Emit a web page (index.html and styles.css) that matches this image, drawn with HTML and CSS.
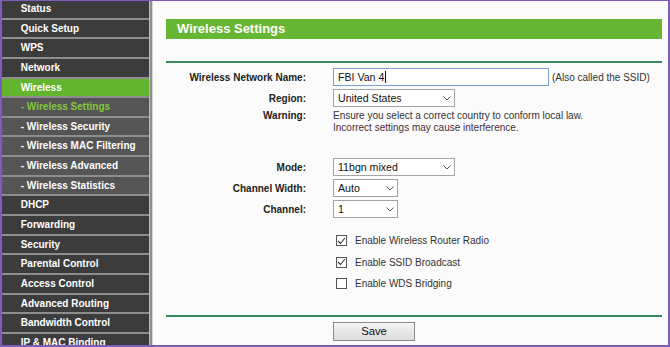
FILE: index.html
```html
<!DOCTYPE html>
<html lang="en">
<head>
    <meta charset="UTF-8">
    <meta name="viewport" content="width=device-width, initial-scale=1.0">
    <title>Wireless Settings</title>
    <link rel="stylesheet" href="styles.css">
</head>
<body>
    <div class="frame">
        <!-- Left menu -->
        <nav class="menu">
            <a class="menu-item">Status</a>
            <a class="menu-item">Quick Setup</a>
            <a class="menu-item">WPS</a>
            <a class="menu-item">Network</a>
            <a class="menu-item active">Wireless</a>
            <a class="menu-item sub current">- Wireless Settings</a>
            <a class="menu-item sub">- Wireless Security</a>
            <a class="menu-item sub">- Wireless MAC Filtering</a>
            <a class="menu-item sub">- Wireless Advanced</a>
            <a class="menu-item sub">- Wireless Statistics</a>
            <a class="menu-item">DHCP</a>
            <a class="menu-item">Forwarding</a>
            <a class="menu-item">Security</a>
            <a class="menu-item">Parental Control</a>
            <a class="menu-item">Access Control</a>
            <a class="menu-item">Advanced Routing</a>
            <a class="menu-item">Bandwidth Control</a>
            <a class="menu-item">IP &amp; MAC Binding</a>
        </nav>
        <div class="menu-edge"></div>

        <!-- Main panel -->
        <main class="content">
            <div class="title-bar">Wireless Settings</div>
            <div class="rule"></div>

            <div class="form">
                <div class="row row-name">
                    <span class="label">Wireless Network Name:</span>
                    <div class="field">
                        <div class="text-input">FBI Van 4<span class="caret"></span></div>
                        <span class="hint">(Also called the SSID)</span>
                    </div>
                </div>
                <div class="row">
                    <span class="label">Region:</span>
                    <div class="field">
                        <div class="select wide">United States
                            <svg class="chevron" width="8" height="5" viewBox="0 0 8 5"><path d="M0.5 0.5 L4 4 L7.5 0.5" fill="none" stroke="#555" stroke-width="1"/></svg>
                        </div>
                    </div>
                </div>
                <div class="row row-warning">
                    <span class="label">Warning:</span>
                    <div class="warning">
                        <div>Ensure you select a correct country to conform local law.</div>
                        <div class="warning-bad">Incorrect settings may cause interference.</div>
                    </div>
                </div>
                <div class="row row-mode">
                    <span class="label">Mode:</span>
                    <div class="field">
                        <div class="select wide">11bgn mixed
                            <svg class="chevron" width="8" height="5" viewBox="0 0 8 5"><path d="M0.5 0.5 L4 4 L7.5 0.5" fill="none" stroke="#555" stroke-width="1"/></svg>
                        </div>
                    </div>
                </div>
                <div class="row">
                    <span class="label">Channel Width:</span>
                    <div class="field">
                        <div class="select narrow">Auto
                            <svg class="chevron" width="8" height="5" viewBox="0 0 8 5"><path d="M0.5 0.5 L4 4 L7.5 0.5" fill="none" stroke="#555" stroke-width="1"/></svg>
                        </div>
                    </div>
                </div>
                <div class="row">
                    <span class="label">Channel:</span>
                    <div class="field">
                        <div class="select narrow">1
                            <svg class="chevron" width="8" height="5" viewBox="0 0 8 5"><path d="M0.5 0.5 L4 4 L7.5 0.5" fill="none" stroke="#555" stroke-width="1"/></svg>
                        </div>
                    </div>
                </div>

                <div class="checks">
                    <div class="check-row">
                        <span class="box"><svg width="9" height="8" viewBox="0 0 9 8"><path d="M1 4 L3.5 6.5 L8 1" fill="none" stroke="#333" stroke-width="1.1"/></svg></span>
                        <span>Enable Wireless Router Radio</span>
                    </div>
                    <div class="check-row">
                        <span class="box"><svg width="9" height="8" viewBox="0 0 9 8"><path d="M1 4 L3.5 6.5 L8 1" fill="none" stroke="#333" stroke-width="1.1"/></svg></span>
                        <span>Enable SSID Broadcast</span>
                    </div>
                    <div class="check-row">
                        <span class="box"></span>
                        <span>Enable WDS Bridging</span>
                    </div>
                </div>
            </div>

            <div class="rule bottom"></div>
            <div class="actions">
                <button class="save">Save</button>
            </div>
        </main>
    </div>
</body>
</html>
```

FILE: styles.css
```css
body {
    margin: 0;
    font-family: "Liberation Sans", Arial, sans-serif;
    background: #fff;
}

.frame {
    width: 670px;
    height: 347px;
    box-sizing: border-box;
    border-style: solid;
    border-color: #7d5cbe;
    border-width: 1px 2px 2px 2px;
    display: flex;
    overflow: hidden;
    background: #fbfbfb;
}

/* Menu */
.menu {
    width: 147px;
    flex-shrink: 0;
    background: #3c3c3c;
    display: flex;
    flex-direction: column;
    margin-top: -1px;
}

.menu-item {
    display: block;
    flex-shrink: 0;
    height: 17.65px;
    line-height: 17.65px;
    padding-left: 18.7px;
    border-bottom: 2px solid #8e8e8e;
    background: #3c3c3c;
    color: #fff;
    font-size: 10px;
    font-weight: bold;
    white-space: nowrap;
}

.menu-item.active {
    background: #63b52f;
}

.menu-item.sub {
    background: #555555;
}

.menu-item.current {
    color: #84c93c;
}

.menu-edge {
    width: 4px;
    flex-shrink: 0;
    background: linear-gradient(to right, #bdbdbd 0, #bdbdbd 1px, #8f8f8f 1px, #8f8f8f 3px, #d6d6d6 3px);
}

/* Main panel */
.content {
    flex: 1;
    padding: 0 6px 0 13px;
    display: flex;
    flex-direction: column;
    color: #222;
}

.title-bar {
    margin-top: 18px;
    height: 20px;
    line-height: 20px;
    background: #66b634;
    color: #fff;
    font-size: 13px;
    font-weight: bold;
    padding-left: 11px;
}

.rule {
    margin-top: 22px;
    height: 2px;
    background: #3b8a5e;
    flex-shrink: 0;
}

.rule.bottom {
    margin-top: 20.5px;
}

.form {
    display: flex;
    flex-direction: column;
    gap: 3px;
    margin-top: 5px;
}

.row {
    display: flex;
    align-items: center;
    gap: 27px;
    min-height: 18px;
}

.row-mode {
    margin-top: 21px;
}

.label {
    width: 140px;
    flex-shrink: 0;
    text-align: right;
    font-size: 10px;
    font-weight: bold;
    color: #222;
}

.field {
    display: flex;
    align-items: center;
    gap: 3px;
}

.text-input {
    width: 216px;
    height: 18px;
    box-sizing: border-box;
    border: 1px solid #7a9dd6;
    background: #fff;
    padding-left: 4px;
    font-size: 10.6px;
    line-height: 16px;
    color: #111;
    display: flex;
    align-items: center;
}

.caret {
    display: inline-block;
    width: 1px;
    height: 12px;
    background: #111;
    margin-left: 1px;
}

.hint {
    font-size: 10px;
    color: #333;
}

.select {
    height: 18px;
    box-sizing: border-box;
    border: 1px solid #a3a3a3;
    background: #fff;
    padding: 0 3px 0 4px;
    font-size: 10.6px;
    color: #111;
    display: flex;
    align-items: center;
    justify-content: space-between;
}

.select.wide {
    width: 122px;
}

.select.narrow {
    width: 65px;
}

.chevron {
    flex-shrink: 0;
}

.row-warning {
    align-items: flex-start;
}

.row-warning .label {
    line-height: 12px;
}

.warning {
    font-size: 10px;
    line-height: 12px;
    color: #333;
}

.warning-bad {
    color: #4a2c3c;
}

/* Checkboxes */
.checks {
    display: flex;
    flex-direction: column;
    margin-top: 9px;
    padding-left: 170px;
}

.check-row {
    height: 21.5px;
    display: flex;
    align-items: center;
    gap: 8px;
    font-size: 10px;
    color: #333;
}

.box {
    width: 11px;
    height: 11px;
    box-sizing: border-box;
    border: 1px solid #555;
    background: #fff;
    display: flex;
    align-items: center;
    justify-content: center;
}

/* Save */
.actions {
    margin-top: 4px;
    padding-left: 167px;
}

.save {
    width: 82px;
    height: 19px;
    border: 1px solid #8b8b8b;
    background: linear-gradient(#f4f4f4, #dcdcdc);
    font-family: "Liberation Sans", Arial, sans-serif;
    font-size: 11.3px;
    color: #111;
    padding: 0;
}
```
